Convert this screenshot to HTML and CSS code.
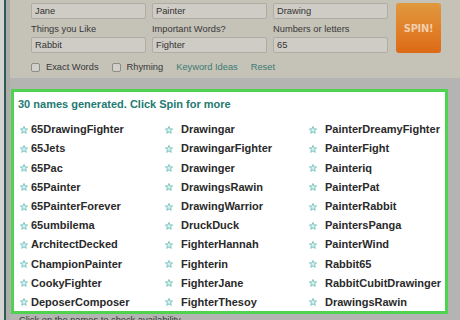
FILE: index.html
```html
<!DOCTYPE html>
<html lang="en">
<head>
  <meta charset="UTF-8" />
  <meta name="viewport" content="width=device-width, initial-scale=1.0" />
  <title>Name Generator</title>
  <link rel="stylesheet" href="styles.css">
</head>
<body>

  <div class="page">
    <div class="form">
      <div class="fields">
        <input type="text" value="Jane" readonly />
        <input type="text" value="Painter" readonly />
        <input type="text" value="Drawing" readonly />
        <button class="spin">SPIN!</button>
        <label>Things you Like</label>
        <label>Important Words?</label>
        <label>Numbers or letters</label>
        <input type="text" value="Rabbit" readonly />
        <input type="text" value="Fighter" readonly />
        <input type="text" value="65" readonly />
      </div>
      <div class="options">
        <span class="option"><span class="check"></span>Exact Words</span>
        <span class="option"><span class="check"></span>Rhyming</span>
        <a class="link">Keyword Ideas</a>
        <a class="link">Reset</a>
      </div>
    </div>

    <div class="results">
      <h2>30 names generated. Click Spin for more</h2>
      <ul class="names" id="names"></ul>
    </div>

    <p class="note">Click on the names to check availability</p>
  </div>

  <script>
    const names = [
      "65DrawingFighter", "65Jets", "65Pac", "65Painter", "65PainterForever",
      "65umbilema", "ArchitectDecked", "ChampionPainter", "CookyFighter", "DeposerComposer",
      "Drawingar", "DrawingarFighter", "Drawinger", "DrawingsRawin", "DrawingWarrior",
      "DruckDuck", "FighterHannah", "Fighterin", "FighterJane", "FighterThesoy",
      "PainterDreamyFighter", "PainterFight", "Painteriq", "PainterPat", "PainterRabbit",
      "PaintersPanga", "PainterWind", "Rabbit65", "RabbitCubitDrawinger", "DrawingsRawin"
    ];

    const star = `<svg class="star" viewBox="0 0 10 10" width="8" height="8">
      <path d="M5 0.6 L6.3 3.6 L9.5 3.8 L7 5.9 L7.8 9.2 L5 7.4 L2.2 9.2 L3 5.9 L0.5 3.8 L3.7 3.6 Z" />
    </svg>`;

    // Pintar la lista
    const list = document.getElementById("names");
    names.forEach(name => {
      list.innerHTML += `<li>${star}${name}</li>`;
    });
  </script>

</body>
</html>
```

FILE: styles.css
```css
body {
  margin: 0;
  width: 460px;
  height: 320px;
  overflow: hidden;
  font-family: "Liberation Sans", Arial, sans-serif;
  color: #333;
  background: linear-gradient(to right, #d4d4d2 0 4px, #2e5b55 4px 6px, #adadaa 6px 10px, #b4b4b2 10px);
}

.page {
  padding-left: 10px;
}

.form {
  background-color: #c5c2b8;
  padding: 3px 0 0 21px;
  height: 75px;
}

.fields {
  display: grid;
  grid-template-columns: 115px 115px 115px 47px;
  grid-template-rows: 16px 18px 16px;
  column-gap: 6px;
}

.fields input {
  box-sizing: border-box;
  width: 100%;
  height: 16px;
  margin: 0;
  padding: 0 3px;
  border: 1px solid #afaca5;
  border-radius: 2px;
  background-color: #cfccc6;
  font-family: "Liberation Sans", Arial, sans-serif;
  font-size: 9.3px;
  color: #333;
  outline: none;
}

.fields label {
  align-self: end;
  font-size: 9.3px;
  line-height: 1;
  padding-bottom: 3px;
  color: #383838;
}

.spin {
  grid-column: 4;
  grid-row: 1 / 4;
  margin-left: 2px;
  border: none;
  border-radius: 3px;
  background: linear-gradient(#e0993f, #e17f27 55%, #dc6a17);
  color: #f1cfae;
  font-family: "DejaVu Sans Condensed", "DejaVu Sans", sans-serif;
  font-weight: bold;
  font-size: 11px;
  letter-spacing: -0.3px;
  padding: 0;
}

.options {
  display: flex;
  align-items: center;
  gap: 13px;
  height: 12px;
  margin-top: 8px;
  font-size: 9.3px;
  color: #383838;
}

.option {
  display: flex;
  align-items: center;
}

.check {
  width: 7px;
  height: 7px;
  margin-right: 6px;
  border: 1px solid #8e8c87;
  border-radius: 2px;
  background-color: #d2d0ca;
}

.link {
  color: #3b7c71;
}

.results {
  box-sizing: border-box;
  width: 437px;
  height: 225px;
  margin: 11px 0 0 1px;
  padding: 3px 0 0 4px;
  border: 3px solid #4fd24f;
  background-color: #fff;
}

.results h2 {
  margin: 0 0 6px;
  font-size: 11px;
  line-height: 19.2px;
  color: #247a72;
}

.names {
  list-style: none;
  margin: 0;
  padding: 0 0 0 2px;
  display: grid;
  grid-auto-flow: column;
  grid-template-rows: repeat(10, 19.2px);
  grid-template-columns: 145px 144px 1fr;
}

.names li {
  display: flex;
  align-items: center;
  font-size: 11px;
  font-weight: bold;
  line-height: 19.2px;
  color: #2a2a2a;
  white-space: nowrap;
}

.star {
  flex: none;
  margin-right: 8px;
  fill: #d6efed;
  stroke: #6fbfbc;
  stroke-width: 1.1;
  stroke-linejoin: round;
}
.names li:nth-child(-n+10) .star {
  margin-right: 3px;
}

.note {
  margin: 1px 0 0 9px;
  font-size: 9.3px;
  color: #333;
}
```
